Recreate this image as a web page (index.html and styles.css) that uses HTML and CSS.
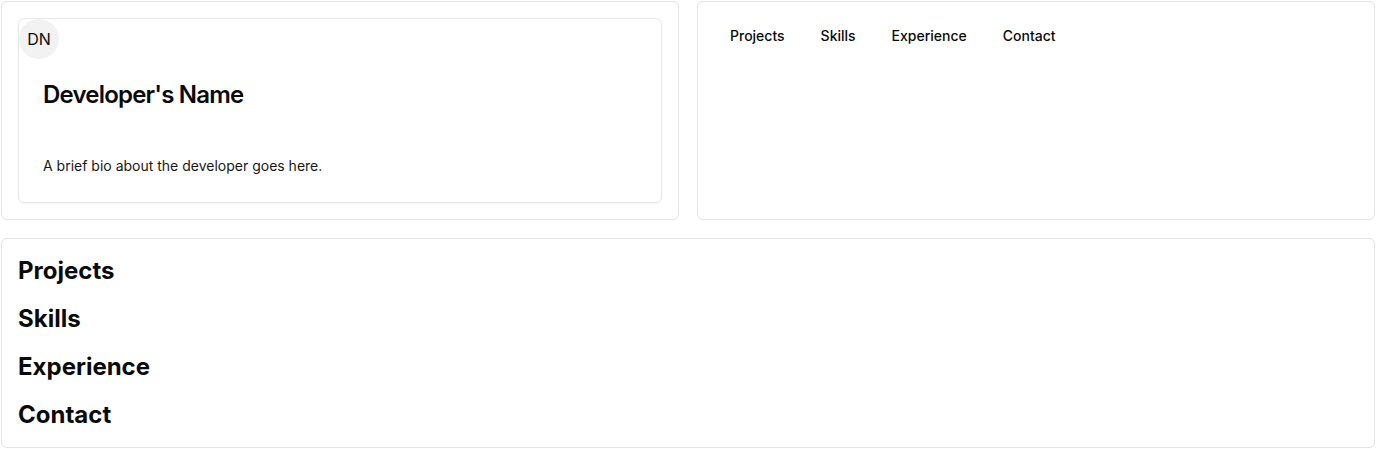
FILE: index.html
```html
<!DOCTYPE html>
<html lang="en">
<head>
<meta charset="utf-8">
<title>Developer Portfolio</title>
<link rel="stylesheet" href="styles.css">
</head>
<body>
<div class="page">
  <div class="top-row">
    <section class="panel">
      <div class="profile-card">
        <div class="avatar">DN</div>
        <div class="profile-header">
          <h1 class="profile-title">Developer's Name</h1>
          <p class="profile-desc"></p>
        </div>
        <div class="profile-content">
          <p class="bio">A brief bio about the developer goes here.</p>
        </div>
      </div>
    </section>
    <section class="panel">
      <nav class="nav">
        <a class="nav-item" href="#projects">Projects</a>
        <a class="nav-item" href="#skills">Skills</a>
        <a class="nav-item" href="#experience">Experience</a>
        <a class="nav-item" href="#contact">Contact</a>
      </nav>
    </section>
  </div>
  <section class="panel sections">
    <h2 class="section-title" id="projects">Projects</h2>
    <h2 class="section-title" id="skills">Skills</h2>
    <h2 class="section-title" id="experience">Experience</h2>
    <h2 class="section-title" id="contact">Contact</h2>
  </section>
</div>
</body>
</html>
```

FILE: styles.css
```css
* { box-sizing: border-box; }
html, body {
  margin: 0;
  padding: 0;
  background: #ffffff;
}
body {
  font-family: Inter, "Noto Sans", "Liberation Sans", sans-serif;
  color: #0a0a0a;
  font-size: 14px;
  line-height: 20px;
}
.page {
  padding: 1px;
  display: flex;
  flex-direction: column;
  gap: 18px;
}
.top-row {
  display: grid;
  grid-template-columns: 1fr 1fr;
  gap: 18px;
}
.panel {
  border: 1px solid #e4e4e4;
  border-radius: 6px;
  padding: 16px;
  background: #fff;
  box-shadow: 0 0 1px rgba(0,0,0,0.06);
}
.profile-card {
  border: 1px solid #e6e6e6;
  border-radius: 6px;
  background: #fff;
  box-shadow: 0 1px 2px rgba(0,0,0,0.04);
}
.avatar {
  width: 40px;
  height: 40px;
  border-radius: 50%;
  background: #f2f2f2;
  display: flex;
  align-items: center;
  justify-content: center;
  font-size: 16px;
  color: #0a0a0a;
}
.profile-header {
  padding: 24px;
  display: flex;
  flex-direction: column;
  gap: 6px;
}
.profile-title {
  margin: 0;
  font-size: 24px;
  line-height: 24px;
  font-weight: 600;
  letter-spacing: -0.8px;
}
.profile-desc {
  margin: 0;
  height: 19px;
}
.profile-content {
  padding: 0 24px 26px;
}
.bio {
  margin: 0;
  font-size: 14px;
  line-height: 20px;
  color: #171717;
}
.nav {
  display: flex;
  gap: 4px;
}
.nav-item {
  display: inline-flex;
  align-items: center;
  height: 36px;
  padding: 0 16px;
  font-size: 14px;
  font-weight: 500;
  color: #0a0a0a;
  text-decoration: none;
  border-radius: 6px;
}
.sections {
  display: flex;
  flex-direction: column;
  gap: 16px;
}
.section-title {
  margin: 0;
  font-size: 24px;
  line-height: 32px;
  font-weight: 700;
}
```
